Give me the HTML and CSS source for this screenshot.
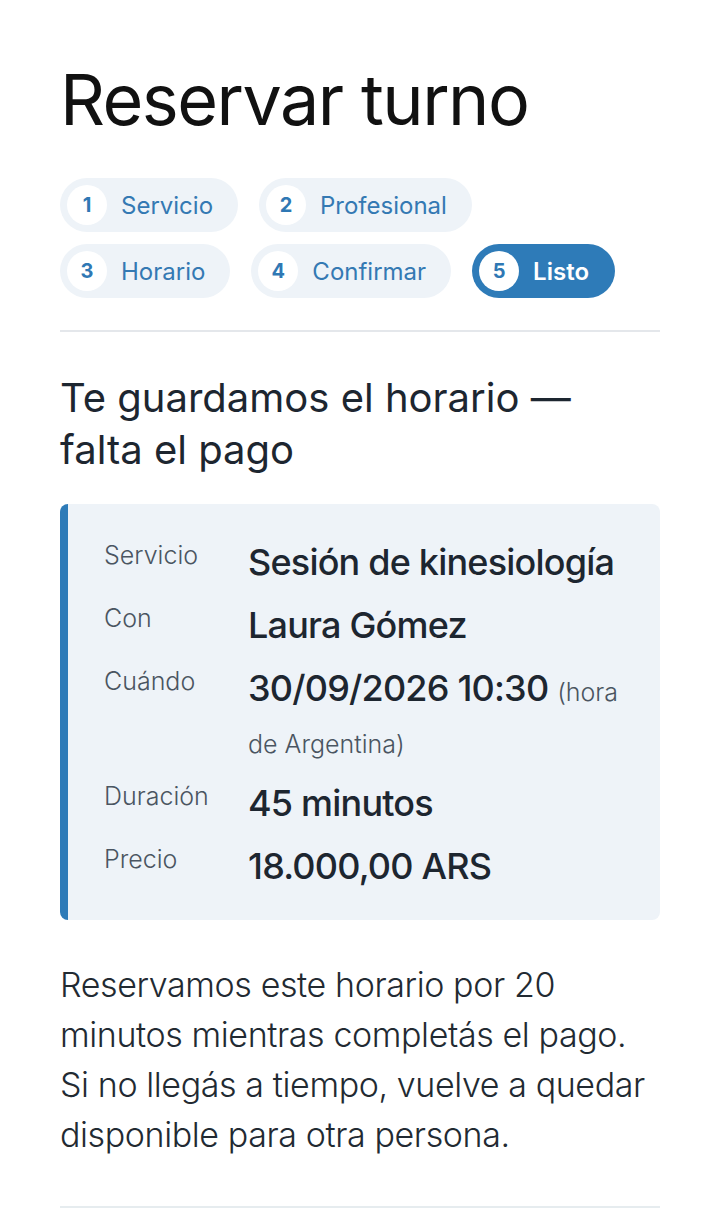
FILE: index.html
```html
<!DOCTYPE html>
<html lang="es">
<head>
<meta charset="utf-8">
<title>Reservar turno</title>
<link rel="stylesheet" href="styles.css">
</head>
<body>
<main class="page">
  <h1 class="title">Reservar turno</h1>
  <ol class="steps">
    <li class="step"><span class="num">1</span><span class="label">Servicio</span></li>
    <li class="step"><span class="num">2</span><span class="label">Profesional</span></li>
    <li class="step"><span class="num">3</span><span class="label">Horario</span></li>
    <li class="step"><span class="num">4</span><span class="label">Confirmar</span></li>
    <li class="step active"><span class="num">5</span><span class="label">Listo</span></li>
  </ol>
  <hr class="rule">
  <h2 class="heading">Te guardamos el horario — falta el pago</h2>
  <dl class="summary">
    <dt>Servicio</dt><dd>Sesión de kinesiología</dd>
    <dt>Con</dt><dd>Laura Gómez</dd>
    <dt>Cuándo</dt><dd>30/09/2026 10:30 <span class="tz">(hora</span> <span class="tz">de Argentina)</span></dd>
    <dt>Duración</dt><dd>45 minutos</dd>
    <dt>Precio</dt><dd>18.000,00 ARS</dd>
  </dl>
  <p class="note">Reservamos este horario por 20 minutos mientras completás el pago. Si no llegás a tiempo, vuelve a quedar disponible para otra persona.</p>
  <hr class="rule bottom">
</main>
</body>
</html>
```

FILE: styles.css
```css
* { box-sizing: border-box; }
html, body { margin: 0; padding: 0; background: #ffffff; }
body {
  font-family: Inter, "Noto Sans", "Liberation Sans", sans-serif;
  color: #1d2630;
}
.page {
  padding: 58px 60px 0 60px;
}
.title {
  margin: 0;
  font-size: 70px;
  font-weight: 400;
  line-height: 84px;
  letter-spacing: -1.5px;
  color: #111111;
}
.steps {
  list-style: none;
  margin: 36px 0 0 0;
  padding: 0;
  display: flex;
  flex-wrap: wrap;
  gap: 12px 21px;
  max-width: 580px;
}
.step {
  display: flex;
  align-items: center;
  gap: 14px;
  height: 54px;
  padding: 0 25px 0 7px;
  border-radius: 27px;
  background: #eef3f8;
  color: #3479b3;
}
.num {
  width: 40px;
  height: 40px;
  border-radius: 50%;
  background: #ffffff;
  display: flex;
  align-items: center;
  justify-content: center;
  font-size: 20px;
  font-weight: 700;
  color: #2f78b4;
}
.label {
  font-size: 24px;
  font-weight: 400;
}
.step.active {
  background: #2e7bb8;
  color: #ffffff;
  padding-right: 26px;
}
.step.active .label { font-weight: 600; }
.rule {
  border: 0;
  border-top: 2px solid #e4e7eb;
  margin: 32px 0 0 0;
}
.heading {
  margin: 40px 0 0 0;
  font-size: 40px;
  font-weight: 400;
  line-height: 52px;
  letter-spacing: 0;
  color: #1d2630;
}
.summary {
  margin: 28px 0 0 0;
  padding: 32px 24px 28px 36px;
  background: #eef3f8;
  border-left: 8px solid #2e7bb8;
  border-radius: 8px;
  display: grid;
  grid-template-columns: 144px 1fr;
  row-gap: 11px;
}
.summary dt {
  font-size: 25px;
  line-height: 38px;
  color: #4a5561;
  font-weight: 300;
}
.summary dd {
  margin: 0;
  font-size: 36px;
  line-height: 52px;
  font-weight: 500;
  color: #1d2630;
  letter-spacing: -0.8px;
}
.summary .tz {
  font-size: 25px;
  line-height: 1;
  font-weight: 300;
  color: #4a5561;
  letter-spacing: 0;
}
.note {
  margin: 40px 0 0 0;
  font-size: 34px;
  line-height: 50px;
  font-weight: 300;
  color: #222a32;
  letter-spacing: -0.4px;
}
.rule.bottom {
  margin-top: 46px;
  border-top-color: #e6ecef;
}
```
